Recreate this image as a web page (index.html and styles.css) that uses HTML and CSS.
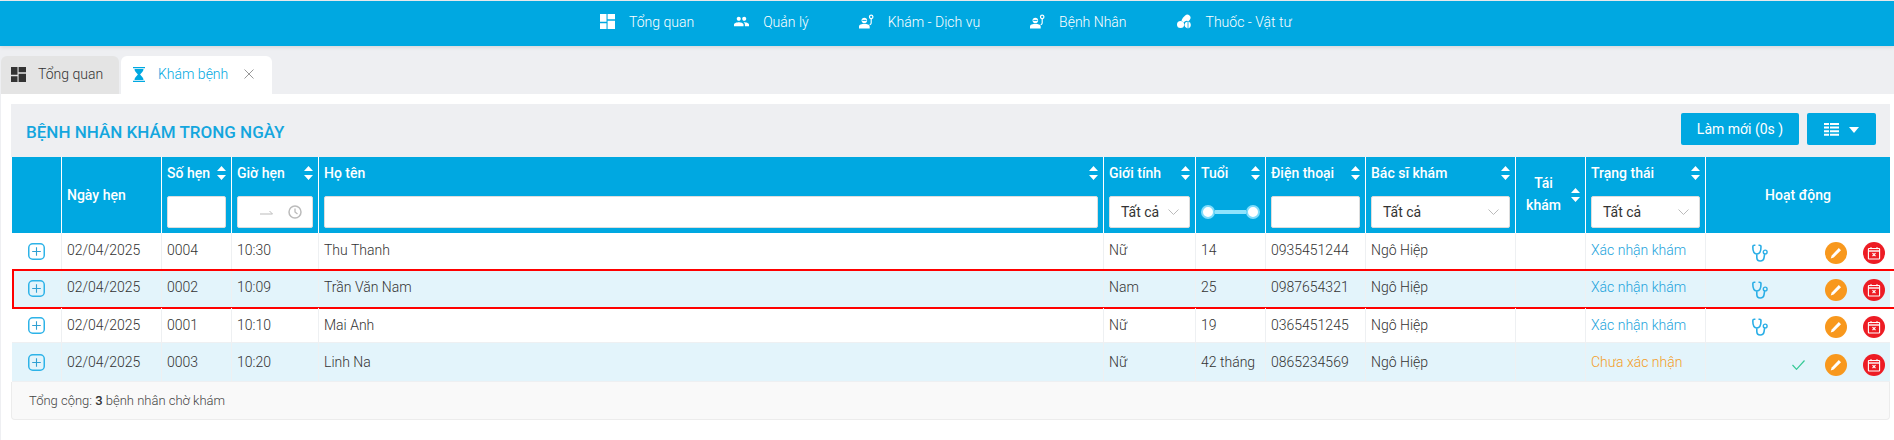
FILE: index.html
```html
<!DOCTYPE html>
<html lang="vi">
<head>
<meta charset="utf-8">
<title>Khám bệnh</title>
<link rel="stylesheet" href="styles.css">
</head>
<body>
<svg class="sprite" xmlns="http://www.w3.org/2000/svg">
  <symbol id="i-dash" viewBox="0 0 15 15"><path d="M0 0h6.500v7.800H0zM0 9.300h6.500V15H0zM7.600 0H15v5.200H7.600zM7.600 6.700H15V15H7.600z"/></symbol>
  <symbol id="i-people" viewBox="1 4 22 16"><path d="M16 11c1.660 0 2.990-1.340 2.990-3S17.660 5 16 5c-1.660 0-3 1.340-3 3s1.340 3 3 3zm-8 0c1.660 0 2.990-1.340 2.990-3S9.660 5 8 5C6.340 5 5 6.340 5 8s1.340 3 3 3zm0 2c-2.330 0-7 1.170-7 3.500V19h14v-2.500c0-2.330-4.670-3.500-7-3.500zm8 0c-.29 0-.62.02-.97.05 1.160.84 1.970 1.970 1.970 3.450V19h6v-2.500c0-2.330-4.670-3.500-7-3.500z"/></symbol>
  <symbol id="i-doctor" viewBox="0 0 16 15"><path d="M5.700 3.600c1.700 0 3 1.200 3 2.800S7.400 9.200 5.700 9.200 2.700 8 2.700 6.400s1.300-2.800 3-2.800zM0 15v-2c0-2.300 2.900-3.200 5.700-3.200s5.700.9 5.700 3.200v2z"/><path d="M3.500 5.800h4.400v1H3.500z" fill="#00a8e1"/><path d="M13 0a2.600 2.600 0 0 1 .6 5.100v3.700c0 1.600-1 2.500-2.300 2.700v-1.200c.7-.2 1.100-.7 1.100-1.500V5.100A2.600 2.600 0 0 1 13 0zm0 1.400a1.200 1.200 0 1 0 0 2.400 1.200 1.200 0 0 0 0-2.400z"/></symbol>
  <symbol id="i-pills" viewBox="0 0 16 15"><path d="M6.300 3.500 8.700 1a3.400 3.400 0 0 1 4.800 4.800l-1.200 1.300a4.600 4.600 0 0 0-5.300 1.500L4.700 6.300z"/><circle cx="3.800" cy="10.700" r="3.800"/><path d="M8 11a4 4 0 0 1 3.300-3.500V15A4 4 0 0 1 8 11.500zM12.200 7.500a4 4 0 0 1 0 7.500z"/></symbol>
  <symbol id="i-sort" viewBox="0 0 9 14"><path d="M4.500 0 9 5H0zM0 9h9l-4.500 5z"/></symbol>
  <symbol id="i-chev" viewBox="0 0 11 6"><path d="M.5.500l5 5 5-5" fill="none" stroke="currentColor"/></symbol>
  <symbol id="i-plus" viewBox="0 0 17 17"><rect x=".75" y=".75" width="15.500" height="15.500" rx="4" fill="none" stroke="#2db3e8" stroke-width="1.500"/><path d="M8.500 4.200v8.600M4.200 8.500h8.600" stroke="#2f9fd2" stroke-width="1.100"/></symbol>
  <symbol id="i-steth" viewBox="0 0 16 18"><path d="M3.400 1.200H2.300C1.300 1.200.8 1.800.8 2.800c0 3 .8 7.200 4 7.200s4.200-4.200 4.200-7.200c0-1-.6-1.600-1.600-1.600H6.500M4.800 10v3.300c0 2.300 1.500 3.700 3.400 3.700s3.600-1.300 3.900-3.700l.6-3.700" fill="none" stroke="#2aaee6" stroke-width="1.600"/><circle cx="13.200" cy="8" r="1.900" fill="none" stroke="#2aaee6" stroke-width="1.400"/></symbol>
  <symbol id="i-edit" viewBox="0 0 22 22"><circle cx="11" cy="11" r="11" fill="#f8981d"/><path d="m13.800 6 2.200 2.200-7.300 7.300-3 1 1-3z" fill="#fff"/></symbol>
  <symbol id="i-cancel" viewBox="0 0 22 22"><circle cx="11" cy="11" r="11" fill="#ed1c24"/><path d="M6 6.500h10c.4 0 .6.200.6.600v9.300c0 .4-.2.600-.6.600H6c-.4 0-.6-.2-.6-.6V7.100c0-.4.200-.6.600-.6z" fill="none" stroke="#fff" stroke-width="1.100"/><path d="M5.500 9h11" stroke="#fff" stroke-width="1.400"/><path d="M8 5v2.200M14 5v2.200" stroke="#fff"/><path d="m9.500 11.200 3 3M12.500 11.200l-3 3" stroke="#fff" stroke-width="1.200"/></symbol>
</svg>

<header class="topbar">
  <nav class="menu">
    <a class="menu-item menu-item--first"><svg class="menu-icon"><use href="#i-dash"/></svg>Tổng quan</a>
    <a class="menu-item"><svg class="menu-icon"><use href="#i-people"/></svg>Quản lý</a>
    <a class="menu-item"><svg class="menu-icon"><use href="#i-doctor"/></svg>Khám - Dịch vụ</a>
    <a class="menu-item"><svg class="menu-icon"><use href="#i-doctor"/></svg>Bệnh Nhân</a>
    <a class="menu-item"><svg class="menu-icon"><use href="#i-pills"/></svg>Thuốc - Vật tư</a>
  </nav>
</header>

<nav class="tabs">
  <div class="tab tab--idle"><svg class="tab-icon tab-icon--dark"><use href="#i-dash"/></svg>Tổng quan</div>
  <div class="tab tab--active">
    <svg class="tab-hourglass" viewBox="0 0 12 15"><path d="M0 0h12v1.200H0zM0 13.800h12V15H0zM1.500 2h9c0 2.400-2.100 4-3.400 5.500 1.300 1.500 3.400 3.100 3.400 5.500h-9c0-2.400 2.100-4 3.400-5.500C3.600 6 1.500 4.400 1.500 2z"/></svg>
    <span>Khám bệnh</span>
    <svg class="tab-close" viewBox="0 0 10 10"><path d="m.5.500 9 9M9.500.500l-9 9" fill="none" stroke="#999"/></svg>
  </div>
</nav>

<main class="content">
  <div class="panel-head">
    <h1 class="panel-title">BỆNH NHÂN KHÁM TRONG NGÀY</h1>
    <div class="panel-tools">
      <button class="btn btn--refresh">Làm mới (0s )</button>
      <button class="btn btn--cols">
        <svg class="cols-icon" viewBox="0 0 15 13"><path d="M0 0h5v2H0zM6 0h9v2H6zM0 3.600h5v2H0zM6 3.600h9v2H6zM0 7.200h5v2H0zM6 7.200h9v2H6zM0 10.800h5v2H0zM6 10.800h9v2H6z"/></svg>
        <svg class="caret-icon" viewBox="0 0 10 6"><path d="M0 0h10L5 6z"/></svg>
      </button>
    </div>
  </div>

  <div class="table">
    <div class="grid thead">
      <div class="th"></div>
      <div class="th th--mid">Ngày hẹn</div>
      <div class="th">
        <div class="th-label">Số hẹn<svg class="sort"><use href="#i-sort"/></svg></div>
        <div class="filter"></div>
      </div>
      <div class="th">
        <div class="th-label">Giờ hẹn<svg class="sort"><use href="#i-sort"/></svg></div>
        <div class="filter filter--time">
          <svg class="time-arrow" viewBox="0 0 13 5"><path d="M0 4h12.500L9.500 1" fill="none" stroke="#bbb"/></svg>
          <svg class="time-clock" viewBox="0 0 14 14"><circle cx="7" cy="7" r="6" fill="none" stroke="#bbb" stroke-width="1.500"/><path d="M7 3.500V7l2.500 2" fill="none" stroke="#bbb" stroke-width="1.300"/></svg>
        </div>
      </div>
      <div class="th">
        <div class="th-label">Họ tên<svg class="sort"><use href="#i-sort"/></svg></div>
        <div class="filter"></div>
      </div>
      <div class="th">
        <div class="th-label">Giới tính<svg class="sort"><use href="#i-sort"/></svg></div>
        <div class="filter filter--select">Tất cả<svg class="chev"><use href="#i-chev"/></svg></div>
      </div>
      <div class="th">
        <div class="th-label">Tuổi<svg class="sort"><use href="#i-sort"/></svg></div>
        <div class="range"><span class="range-dot"></span><span class="range-track"></span><span class="range-dot"></span></div>
      </div>
      <div class="th">
        <div class="th-label">Điện thoại<svg class="sort"><use href="#i-sort"/></svg></div>
        <div class="filter"></div>
      </div>
      <div class="th">
        <div class="th-label">Bác sĩ khám<svg class="sort"><use href="#i-sort"/></svg></div>
        <div class="filter filter--select">Tất cả<svg class="chev"><use href="#i-chev"/></svg></div>
      </div>
      <div class="th th--retest">
        <span class="th-two">Tái<br>khám</span><svg class="sort"><use href="#i-sort"/></svg>
      </div>
      <div class="th">
        <div class="th-label">Trạng thái<svg class="sort"><use href="#i-sort"/></svg></div>
        <div class="filter filter--select">Tất cả<svg class="chev"><use href="#i-chev"/></svg></div>
      </div>
      <div class="th th--mid th--center">Hoạt động</div>
    </div>

    <div class="grid row row--a">
      <div class="td td--plus"><svg class="plus"><use href="#i-plus"/></svg></div>
      <div class="td">02/04/2025</div><div class="td">0004</div><div class="td">10:30</div><div class="td">Thu Thanh</div><div class="td">Nữ</div><div class="td">14</div><div class="td">0935451244</div><div class="td">Ngô Hiệp</div><div class="td"></div>
      <div class="td status">Xác nhận khám</div>
      <div class="td td--actions"><svg class="steth"><use href="#i-steth"/></svg><svg class="act act--first"><use href="#i-edit"/></svg><svg class="act"><use href="#i-cancel"/></svg></div>
    </div>
    <div class="grid row row--b row--alt row--selected">
      <div class="td td--plus"><svg class="plus"><use href="#i-plus"/></svg></div>
      <div class="td">02/04/2025</div><div class="td">0002</div><div class="td">10:09</div><div class="td">Trần Văn Nam</div><div class="td">Nam</div><div class="td">25</div><div class="td">0987654321</div><div class="td">Ngô Hiệp</div><div class="td"></div>
      <div class="td status">Xác nhận khám</div>
      <div class="td td--actions"><svg class="steth"><use href="#i-steth"/></svg><svg class="act act--first"><use href="#i-edit"/></svg><svg class="act"><use href="#i-cancel"/></svg></div>
    </div>
    <div class="grid row row--c">
      <div class="td td--plus"><svg class="plus"><use href="#i-plus"/></svg></div>
      <div class="td">02/04/2025</div><div class="td">0001</div><div class="td">10:10</div><div class="td">Mai Anh</div><div class="td">Nữ</div><div class="td">19</div><div class="td">0365451245</div><div class="td">Ngô Hiệp</div><div class="td"></div>
      <div class="td status">Xác nhận khám</div>
      <div class="td td--actions"><svg class="steth"><use href="#i-steth"/></svg><svg class="act act--first"><use href="#i-edit"/></svg><svg class="act"><use href="#i-cancel"/></svg></div>
    </div>
    <div class="grid row row--d row--alt">
      <div class="td td--plus"><svg class="plus"><use href="#i-plus"/></svg></div>
      <div class="td">02/04/2025</div><div class="td">0003</div><div class="td">10:20</div><div class="td">Linh Na</div><div class="td">Nữ</div><div class="td">42 tháng</div><div class="td">0865234569</div><div class="td">Ngô Hiệp</div><div class="td"></div>
      <div class="td status status--pending">Chưa xác nhận</div>
      <div class="td td--actions"><svg class="check" viewBox="0 0 13 10"><path d="m.5 5 4 4.300L12.500.5" fill="none" stroke="#35c995" stroke-width="1.200"/></svg><svg class="act act--first"><use href="#i-edit"/></svg><svg class="act"><use href="#i-cancel"/></svg></div>
    </div>
  </div>

  <div class="panel-foot"><span>Tổng cộng: <b class="count">3</b> bệnh nhân chờ khám</span></div>
</main>
</body>
</html>
```

FILE: styles.css
```css
* { box-sizing: border-box; }
html { height: 440px; overflow: hidden; }
html, body { margin: 0; padding: 0; }
body {
  width: 1894px;
  height: 440px;
  overflow: hidden;
  display: flex;
  flex-direction: column;
  background: #eeeff2;
  font-family: Roboto, "Liberation Sans", sans-serif;
  font-size: 14px;
  font-weight: 300;
  color: #333;
}
.sprite { width: 0; height: 0; display: block; overflow: hidden; position: absolute; }

/* top bar */
.topbar {
  flex: none;
  height: 45px;
  margin-top: 1px;
  background: #00a8e1;
  box-shadow: 0 1px 4px rgba(0,0,0,.12);
  position: relative;
}
.menu { display: flex; height: 41px; padding-left: 600px; align-items: center; }
.menu-item { display: flex; align-items: center; color: #fff; margin-right: 50px; white-space: nowrap; }
.menu-item--first { margin-right: 40px; }
.menu-icon { width: 15px; height: 15px; margin-right: 14px; fill: #fff; flex: none; }

/* tabs */
.tabs { flex: none; display: flex; gap: 2px; height: 48px; padding: 10px 0 0 1px; }
.tab { height: 38px; display: flex; align-items: center; border-radius: 6px 6px 0 0; white-space: nowrap; padding-bottom: 2px; }
.tab--idle { width: 118px; background: #e4e4e4; padding-left: 10px; }
.tab--active { width: 151px; background: #fff; color: #00a8e1; padding-left: 12px; }
.tab-icon { width: 15px; height: 15px; margin-right: 12px; flex: none; }
.tab-icon--dark { fill: #333; }
.tab-hourglass { width: 12px; height: 15px; fill: #00a8e1; margin-right: 13px; flex: none; }
.tab-close { width: 10px; height: 10px; margin-left: 16px; flex: none; }

/* content */
.content { flex: 1; min-height: 0; overflow: hidden; margin-left: 1px; padding: 10px 4px 0 10px; background: #fff; }
.panel-head { height: 53px; display: flex; align-items: center; justify-content: space-between; background: #eeeff2; padding: 0 14px 0 15px; }
.panel-title { margin: 3px 0 0; font-size: 17px; font-weight: 500; color: #14a6de; }
.panel-tools { display: flex; gap: 8px; margin-top: -3px; }
.btn { height: 32px; border: 0; border-radius: 2px; background: #00a8e1; color: #fff; font: 400 14px Roboto, "Liberation Sans", sans-serif; padding: 0; display: flex; align-items: center; justify-content: center; }
.btn--refresh { width: 118px; }
.btn--cols { width: 69px; gap: 10px; }
.cols-icon { width: 15px; height: 13px; fill: #fff; }
.caret-icon { width: 10px; height: 6px; fill: #fff; margin-top: 2px; }

/* table */
.table { margin-left: 1px; }
.grid { display: grid; grid-template-columns: 50px 100px 70px 87px 785px 92px 70px 100px 150px 70px 120px 184px; }
.thead { height: 76px; background: #00a8e1; color: #fff; font-weight: 500; }
.th { border-right: 1px solid #fff; padding: 0 5px; display: flex; flex-direction: column; min-width: 0; }
.th:last-child { border-right: 0; }
.th--mid { justify-content: center; }
.th--center { align-items: center; }
.th--retest { flex-direction: row; align-items: center; justify-content: space-between; }
.th-two { display: block; text-align: center; line-height: 22px; flex: 1; padding-right: 5px; margin-top: -3px; }
.th-label { height: 32px; display: flex; align-items: center; justify-content: space-between; margin-bottom: 7px; }
.sort { width: 9px; height: 14px; fill: #fff; flex: none; }
.filter { height: 32px; background: #fff; border: 1px solid #ddd; border-radius: 2px; }
.filter--select { display: flex; align-items: center; justify-content: space-between; padding: 0 10px 0 11px; color: #333; font-weight: 400; }
.filter--time { display: flex; align-items: center; padding-left: 22px; }
.time-arrow { width: 13px; height: 5px; }
.time-clock { width: 14px; height: 14px; margin-left: 15px; }
.chev { width: 11px; height: 6px; color: #bbb; flex: none; }
.range { height: 32px; display: flex; align-items: center; }
.range-dot { width: 14px; height: 14px; flex: none; border-radius: 50%; background: #fff; border: 2px solid #7fdcfb; }
.range-track { flex: 1; height: 4px; background: #8fe3fd; }

/* rows */
.row { border-bottom: 1px solid #eef0f2; position: relative; }
.row--a { height: 37px; --text-shift: 2px; --icon-shift: 3px; }
.row--b { height: 38px; --text-shift: 4px; --icon-shift: 2px; }
.row--c { height: 35px; --text-shift: 1px; --icon-shift: 3px; }
.row--d { height: 39px; --text-shift: 1px; --icon-shift: 5px; }
.row--alt { background: #e3f4fb; }
.row--selected::after { content: ""; position: absolute; left: 0; right: -10px; top: -1px; bottom: -2px; border: 2px solid #f00; pointer-events: none; }
.td { display: flex; align-items: center; padding: 0 5px var(--text-shift); border-right: 1px solid #eef0f2; white-space: nowrap; min-width: 0; }
.td:last-child { border-right: 0; }
.td--plus { padding: 0 0 0 16px; }
.plus { width: 17px; height: 17px; }
.status { color: #1ba3dc; }
.status--pending { color: #f39c1f; }
.td--actions { padding: var(--icon-shift) 5px 0 0; justify-content: flex-end; }
.steth { width: 16px; height: 18px; margin-right: 57px; flex: none; }
.check { width: 13px; height: 10px; margin-right: 20px; flex: none; }
.act { width: 22px; height: 22px; flex: none; margin-left: 16px; }
.act--first { margin-left: 0; }

/* footer */
.panel-foot { height: 38px; display: flex; align-items: center; background: #f9f9f9; border: 1px solid #ececec; border-top: 0; border-radius: 0 0 4px 4px; padding: 0 0 0 17px; font-size: 13px; color: #444; white-space: nowrap; }
.count { font-weight: 500; color: #333; }
```
